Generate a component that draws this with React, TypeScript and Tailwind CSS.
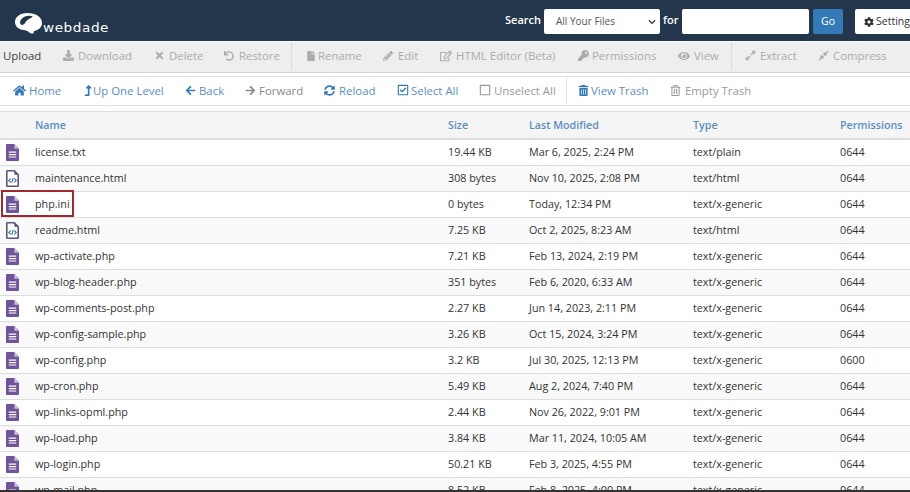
import React from "react";
import { FaHome, FaLevelUpAlt, FaArrowLeft, FaArrowRight, FaSyncAlt, FaRegCheckSquare, FaRegSquare, FaTrashAlt, FaRegTrashAlt, FaDownload, FaTimes, FaUndo, FaFile, FaPencilAlt, FaRegEdit, FaKey, FaEye, FaExpandAlt, FaCompressAlt, FaCog, FaChevronDown } from "react-icons/fa";

const font = "font-['Open_Sans',sans-serif]";

const Tool = ({ icon, label, className, slot = "w-[15px]" }: { icon: React.ReactNode; label: string; className: string; slot?: string }) => (
  <span className={`flex items-center whitespace-nowrap shrink-0 ${className}`}>
    <span className={`shrink-0 flex items-center ${slot}`}>{icon}</span>
    {label}
  </span>
);

const TextIcon = () => (
  <svg width="13" height="17" viewBox="0 0 14 18" preserveAspectRatio="none" className="shrink-0">
    <path d="M1 0h8l5 5v12a1 1 0 0 1-1 1H1a1 1 0 0 1-1-1V1a1 1 0 0 1 1-1z" fill="#6f5499" />
    <path d="M9 0l5 5H9z" fill="#c9bdd9" />
    <path d="M3 8h8v1.2H3zM3 10.6h8v1.2H3zM3 13.2h8v1.2H3z" fill="#fff" />
  </svg>
);

const HtmlIcon = () => (
  <svg width="13" height="17" viewBox="0 0 14 18" preserveAspectRatio="none" className="shrink-0">
    <path d="M1.7.8h7l4.5 4.500v11a.9.9 0 0 1-.9.9H1.7a.9.9 0 0 1-.9-.9V1.700a.9.9 0 0 1 .9-.9z" fill="#fff" stroke="#5a5578" strokeWidth="1.800" />
    <path d="M9 0l5 5H9z" fill="#5a5578" />
    <path d="M5 9l-2 2 2 2M9 9l2 2-2 2M7.800 8.500l-1.600 5" fill="none" stroke="#3f6f9f" strokeWidth="1.200" />
  </svg>
);

const files: [string, string, string, string, string, boolean][] = [
  ["license.txt", "19.44 KB", "Mar 6, 2025, 2:24 PM", "text/plain", "0644", false],
  ["maintenance.html", "308 bytes", "Nov 10, 2025, 2:08 PM", "text/html", "0644", true],
  ["php.ini", "0 bytes", "Today, 12:34 PM", "text/x-generic", "0644", false],
  ["readme.html", "7.25 KB", "Oct 2, 2025, 8:23 AM", "text/html", "0644", true],
  ["wp-activate.php", "7.21 KB", "Feb 13, 2024, 2:19 PM", "text/x-generic", "0644", false],
  ["wp-blog-header.php", "351 bytes", "Feb 6, 2020, 6:33 AM", "text/x-generic", "0644", false],
  ["wp-comments-post.php", "2.27 KB", "Jun 14, 2023, 2:11 PM", "text/x-generic", "0644", false],
  ["wp-config-sample.php", "3.26 KB", "Oct 15, 2024, 3:24 PM", "text/x-generic", "0644", false],
  ["wp-config.php", "3.2 KB", "Jul 30, 2025, 12:13 PM", "text/x-generic", "0600", false],
  ["wp-cron.php", "5.49 KB", "Aug 2, 2024, 7:40 PM", "text/x-generic", "0644", false],
  ["wp-links-opml.php", "2.44 KB", "Nov 26, 2022, 9:01 PM", "text/x-generic", "0644", false],
  ["wp-load.php", "3.84 KB", "Mar 11, 2024, 10:05 AM", "text/x-generic", "0644", false],
  ["wp-login.php", "50.21 KB", "Feb 3, 2025, 4:55 PM", "text/x-generic", "0644", false],
  ["wp-mail.php", "8.52 KB", "Feb 8, 2025, 4:00 PM", "text/x-generic", "0644", false],
];

const cols = "grid grid-cols-[35px_413px_81px_164px_147px_70px] items-center";

export default function App() {
  return (
    <div className={`${font} w-[910px] h-[492px] overflow-hidden bg-white flex flex-col relative`}>
      <header className="h-[41px] shrink-0 bg-[#24364b] flex items-center pl-[15px] relative">
        <svg width="27" height="21" viewBox="0 0 27 21" className="self-start mt-[13px] shrink-0">
          <path d="M12 0C5 0 0 4 0 9c0 4 3 7 8 8 3 0 5 1 7 3 2 1 4 1 4-2 5-1 8-4 8-8 0-6-6-10-15-10z" fill="#fff" />
          <path d="M5 10C5 6 10 2 16 3c2 0 2 1 0 2-3 1-5 3-6 5-1 2-4 3-5 0z" fill="#24364b" />
        </svg>
        <span className="text-white text-[13px] mt-[15px] tracking-[0.5px] ml-[1px] font-['DejaVu_Sans',sans-serif] scale-x-[1.05] origin-left">webdade</span>
        <div className="ml-auto mt-[2px] flex items-center text-white text-[11px]">
          <span className="font-semibold w-[39px] mb-[2px]">Search</span>
          <div className="w-[116px] h-[25px] bg-white rounded-[2px] flex items-center justify-between pl-[12px] pr-[4px] text-[#555] text-[10px]">
            All Your Files
            <FaChevronDown className="text-[8px] text-[#333]" />
          </div>
          <span className="font-semibold w-[22px] pl-[3px] mb-[2px]">for</span>
          <div className="w-[127px] h-[25px] bg-white rounded-[2px]" />
          <div className="w-[30px] h-[25px] ml-[4px] bg-[#337ab7] rounded-[2px] flex items-center justify-center text-[10.5px]">Go</div>
          <div className="w-[55px] h-[25px] ml-[12px] bg-white rounded-l-[2px] flex items-center pl-[9px] gap-[2px] text-[#333] text-[10.5px] overflow-hidden whitespace-nowrap">
            <FaCog className="text-[10px] shrink-0" />
            Settings
          </div>
        </div>
      </header>

      <div className="h-[31px] mt-[1px] shrink-0 bg-[#eeeeee] border-b border-[#d8d8d8] flex items-center pl-[3px] text-[11.4px] text-[#ababab]">
        <span className="text-[#444] w-[60px] shrink-0 mb-[2px]">Upload</span>
        <div className="flex items-center self-stretch pb-[2px]">
          <Tool className="w-[91px]" icon={<FaDownload className="text-[11px]" />} label="Download" />
          <Tool className="w-[70px]" icon={<FaTimes className="text-[11px]" />} label="Delete" />
          <Tool className="w-[67px]" icon={<FaUndo className="text-[10px]" />} label="Restore" />
          <i className="w-px self-stretch bg-[#dcdcdc] mr-[14px]" />
          <Tool className="w-[77px]" slot="w-[12px]" icon={<FaFile className="text-[10px]" />} label="Rename" />
          <Tool className="w-[57px]" icon={<FaPencilAlt className="text-[10px]" />} label="Edit" />
          <Tool className="w-[138px]" slot="w-[16px]" icon={<FaRegEdit className="text-[12px]" />} label="HTML Editor (Beta)" />
          <Tool className="w-[100px]" slot="w-[14px]" icon={<FaKey className="text-[11px]" />} label="Permissions" />
          <Tool className="w-[53px]" slot="w-[16px]" icon={<FaEye className="text-[12px]" />} label="View" />
          <i className="w-px self-stretch bg-[#dcdcdc] mr-[13px]" />
          <Tool className="w-[73px]" icon={<FaExpandAlt className="text-[11px]" />} label="Extract" />
          <Tool className="" icon={<FaCompressAlt className="text-[11px]" />} label="Compress" />
        </div>
      </div>

      <div className="h-[30px] mt-[3px] pb-[1px] shrink-0 bg-white border-y border-[#dedede] flex items-center pl-[13px] text-[11.4px] text-[#5b8ec0]">
        <Tool className="w-[70px]" slot="w-[16px]" icon={<FaHome className="text-[13px] text-[#337ab7]" />} label="Home" />
        <Tool className="w-[102px]" slot="w-[10px]" icon={<FaLevelUpAlt className="text-[11px] text-[#337ab7]" />} label="Up One Level" />
        <Tool className="w-[60px]" slot="w-[14px]" icon={<FaArrowLeft className="text-[11px] text-[#337ab7]" />} label="Back" />
        <Tool className="w-[79px] text-[#888]" slot="w-[14px]" icon={<FaArrowRight className="text-[11px]" />} label="Forward" />
        <Tool className="w-[73px]" icon={<FaSyncAlt className="text-[11px] text-[#337ab7]" />} label="Reload" />
        <Tool className="w-[82px]" slot="w-[14px]" icon={<FaRegCheckSquare className="text-[12px] text-[#337ab7]" />} label="Select All" />
        <Tool className="w-[87px] text-[#999]" icon={<FaRegSquare className="text-[12px]" />} label="Unselect All" />
        <i className="w-px self-stretch bg-[#e2e2e2] mr-[11px]" />
        <Tool className="w-[92px]" slot="w-[13px]" icon={<FaTrashAlt className="text-[11px] text-[#337ab7]" />} label="View Trash" />
        <Tool className="text-[#999]" icon={<FaRegTrashAlt className="text-[11px]" />} label="Empty Trash" />
      </div>

      <div className={`${cols} h-[29px] mt-[5px] pt-[1px] shrink-0 bg-[#f5f5f5] border-t border-b-2 border-[#dddddd] text-[10.7px] font-semibold text-[#5b8ec0]`}>
        <span />
        <span>Name</span>
        <span>Size</span>
        <span>Last Modified</span>
        <span>Type</span>
        <span>Permissions</span>
      </div>

      <div className="flex-1 overflow-hidden border-b-2 border-[#333]">
        {files.map(([name, size, date, type, perm, html], i) => (
          <div key={name} className={`${cols} h-[26px] border-b border-[#dddddd] text-[10.75px] text-[#333] ${i % 2 ? "bg-[#f9f9f9]" : "bg-white"}`}>
            <span className="pl-[6px] flex">{html ? <HtmlIcon /> : <TextIcon />}</span>
            <span>{name}</span>
            <span>{size}</span>
            <span>{date}</span>
            <span>{type}</span>
            <span>{perm}</span>
          </div>
        ))}
      </div>

      <div className="absolute left-[1px] top-[190px] w-[73px] h-[27px] border-2 border-[#a2282f] pointer-events-none" />
    </div>
  );
}
